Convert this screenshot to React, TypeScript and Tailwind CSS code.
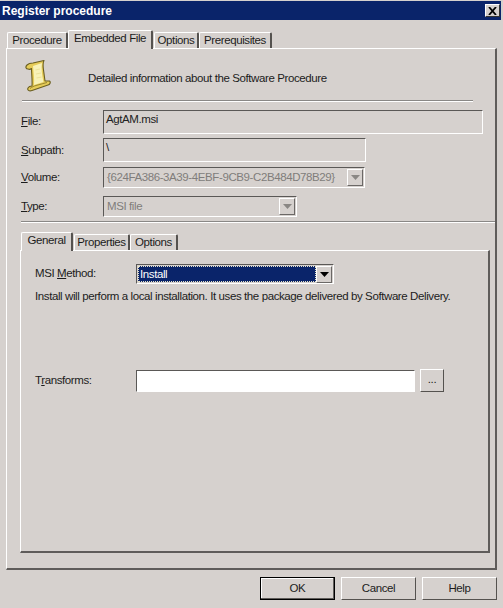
import React from "react";

const Arrow = ({ color = "#8a8784" }: { color?: string }) => (
  <div className="w-[16px] h-[17px] bg-[#d6d1ce] border border-t-white border-l-white border-r-[#6b6866] border-b-[#6b6866] flex items-center justify-center">
    <svg width="9" height="5" viewBox="0 0 9 5"><path d="M0 0h9L4.5 5z" fill={color} /></svg>
  </div>
);

const Tab = ({ label, active, className }: { label: string; active?: boolean; className: string }) => (
  <div
    className={`${className} border-t border-l border-r-2 border-t-white border-l-white border-r-[#55524f] border-b-0 rounded-t-[2px] flex justify-center ${active ? "h-[19px] relative" : "h-[16px]"}`}
  >
    <span className="leading-[14px]">{label}</span>
  </div>
);

const Scroll = () => (
  <svg width="28" height="34" viewBox="0 0 28 34">
    <path
      d="M4 9C2 9 1 7 3 5C5 3 7 3 9 3L20 .5C18.5 3 19 6 19.5 10L21 21L25.5 21C27 22 26 24.5 24 25L8 30.5C5 31.5 3 30 4 28C5 26 7 26 8 26C8.5 20 7.5 14 7.5 8.5C6.5 9.5 5 9.5 4 9Z"
      fill="#e6cc58"
      stroke="#6b5f22"
      strokeWidth="1.1"
      strokeLinejoin="round"
    />
    <path d="M9 6L18 3C17 8 18 15 19.5 22L10 25C10.5 19 9.5 12 9 6Z" fill="#f8f2b8" />
    <path d="M11.5 10l4.5-1M12 14l5-1M12.5 18l5-1" stroke="#ece29c" strokeWidth="1.2" />
    <path d="M6 28.5C8 27 10 26 12 25.5L23 22.5" fill="none" stroke="#9a8730" strokeWidth="1" />
  </svg>
);

export default function App() {
  const sunken = "border border-t-[#5a5856] border-l-[#5a5856] border-r-white border-b-white";
  return (
    <div
      className="w-[503px] h-[608px] bg-[#d6d1ce] overflow-hidden flex flex-col text-[11.5px] tracking-[-0.4px] text-[#1c1c1c] whitespace-nowrap"
      style={{ fontFamily: '"Liberation Sans", Arial, sans-serif' }}
    >
      <div className="mt-[1px] mr-[2px] h-[19px] bg-[#0a246a] flex items-center justify-between pl-[2px] pr-[1px]">
        <span className="text-white font-bold text-[12px] tracking-[0px]">Register procedure</span>
        <div className="w-[15px] h-[13px] bg-[#d6d1ce] border border-t-white border-l-white border-r-[#333] border-b-[#333] flex items-center justify-center">
          <svg width="9" height="8" viewBox="0 0 9 8"><path d="M1 0l7 8M8 0L1 8" stroke="#000" strokeWidth="1.8" fill="none" /></svg>
        </div>
      </div>

      <div className="h-[28px] ml-[7px] flex items-end gap-0 relative z-10">
        <Tab label="Procedure" className="w-[61px]" />
        <Tab label="Embedded File" active className="w-[85px] -mb-[1px] bg-[#d6d1ce]" />
        <Tab label="Options" className="w-[45px] ml-[1px]" />
        <Tab label="Prerequisites" className="w-[73px]" />
      </div>

      <div className="ml-[6px] w-[491px] h-[522px] border border-t-white border-l-white border-r-2 border-b-2 border-r-[#5f5c5a] border-b-[#5f5c5a] flex flex-col">
        <div className="flex items-start h-[51px] pt-[11px] pl-[17px]">
          <Scroll />
          <span className="ml-[36px] mt-[11px] leading-[15px]">Detailed information about the Software Procedure</span>
        </div>
        <div className="ml-[15px] w-[451px] border-t border-b border-t-[#8a8886] border-b-white h-[2px]" />

        <div className="mt-[8px] flex items-center h-[24px]">
          <span className="ml-[14px] w-[82px]"><u>F</u>ile:</span>
          <div className={`${sunken} w-[380px] h-[24px] px-[2px] text-[#222] leading-[17px]`}>AgtAM.msi</div>
        </div>
        <div className="mt-[4px] flex items-center h-[24px]">
          <span className="ml-[14px] w-[82px] pt-[1px]"><u>S</u>ubpath:</span>
          <div className={`${sunken} w-[263px] h-[24px] px-[2px] leading-[17px]`}>\</div>
        </div>
        <div className="mt-[5px] flex items-center h-[21px]">
          <span className="ml-[14px] w-[82px]"><u>V</u>olume:</span>
          <div className={`${sunken} w-[262px] h-[21px] pl-[3px] pr-[1px] flex items-center justify-between text-[#807d7b]`}>
            <span>{"{624FA386-3A39-4EBF-9CB9-C2B484D78B29}"}</span>
            <Arrow />
          </div>
        </div>
        <div className="mt-[8px] flex items-center h-[21px]">
          <span className="ml-[14px] w-[82px] pt-[1px]"><u>T</u>ype:</span>
          <div className={`${sunken} w-[194px] h-[21px] pl-[3px] pr-[1px] flex items-center justify-between text-[#807d7b]`}>
            <span>MSI file</span>
            <Arrow />
          </div>
        </div>
        <div className="mt-[4px] ml-[14px] mr-0 border-t border-b border-t-[#8a8886] border-b-white h-[2px]" />

        <div className="h-[27px] ml-[14px] flex items-end relative z-10">
          <Tab label="General" active className="w-[52px] -mb-[1px] bg-[#d6d1ce]" />
          <Tab label="Properties" className="w-[56px] ml-[1px]" />
          <Tab label="Options" className="w-[48px]" />
        </div>

        <div className="ml-[13px] w-[470px] h-[303px] border border-t-white border-l-white border-r-2 border-b-2 border-r-[#5f5c5a] border-b-[#5f5c5a] flex flex-col">
          <div className="mt-[13px] flex items-center h-[20px]">
            <span className="ml-[14px] w-[101px]">MSI <u>M</u>ethod:</span>
            <div className={`${sunken} w-[198px] h-[20px] p-[1px] flex items-center justify-between`}>
              <div className="flex-1 h-full bg-[#0a246a] text-white leading-[15px] pl-[1px] border border-dotted border-[#e8e4c8]">Install</div>
              <Arrow color="#000" />
            </div>
          </div>
          <div className="mt-[5px] ml-[14px] leading-[15px]">Install will perform a local installation. It uses the package delivered by Software Delivery.</div>
          <div className="mt-[65px] flex items-center h-[23px]">
            <span className="ml-[14px] w-[101px]">T<u>r</u>ansforms:</span>
            <div className={`${sunken} w-[279px] h-[22px] bg-white`} />
            <div className="ml-[5px] w-[24px] h-[23px] border border-t-white border-l-white border-r-[#55524f] border-b-[#55524f] flex items-center justify-center pb-[2px]">...</div>
          </div>
        </div>
      </div>

      <div className="mt-[7px] flex">
        <button className="ml-[260px] w-[75px] h-[23px] border border-black bg-[#d6d1ce] shadow-[inset_-1px_-1px_0_#5f5c5a,inset_1px_1px_0_#fff]">OK</button>
        <button className="ml-[6px] w-[75px] h-[23px] border border-t-white border-l-white border-r-[#55524f] border-b-[#55524f]">Cancel</button>
        <button className="ml-[6px] w-[75px] h-[23px] border border-t-white border-l-white border-r-[#55524f] border-b-[#55524f]">Help</button>
      </div>
    </div>
  );
}
